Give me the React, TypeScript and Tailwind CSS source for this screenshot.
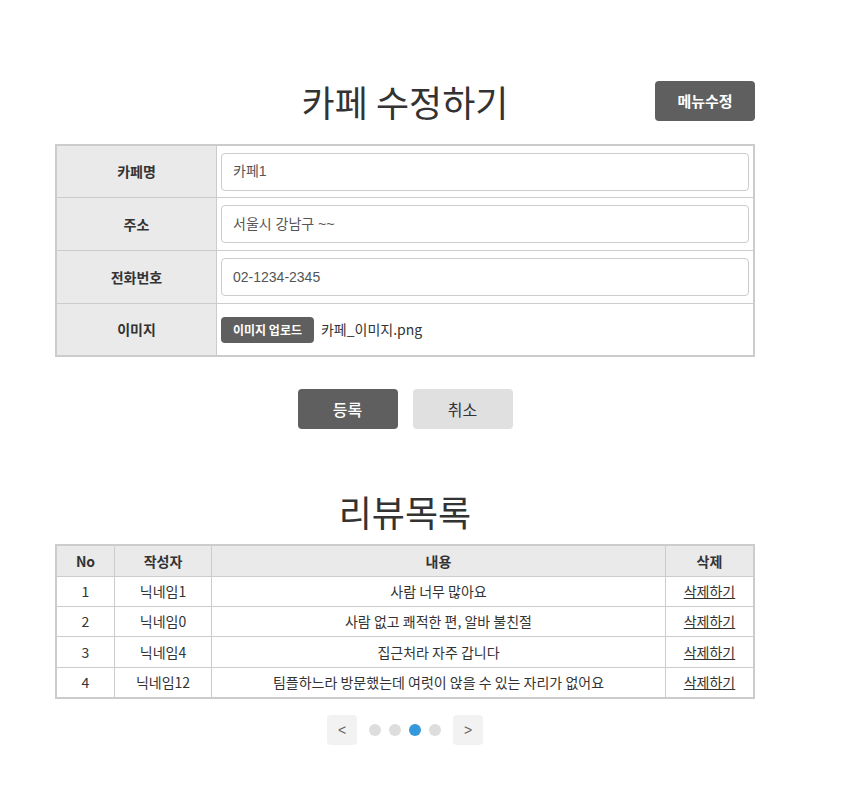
import React from "react";

const reviews = [
  { no: 1, name: "닉네임1", body: "사람 너무 많아요", h: "h-[30px]" },
  { no: 2, name: "닉네임0", body: "사람 없고 쾌적한 편, 알바 불친절", h: "h-[30px]" },
  { no: 3, name: "닉네임4", body: "집근처라 자주 갑니다", h: "h-[31px]" },
  { no: 4, name: "닉네임12", body: "팀플하느라 방문했는데 여럿이 앉을 수 있는 자리가 없어요", h: "h-[30px]" },
];

function InputRow({ label, value, h, top }: { label: string; value: string; h: string; top: boolean }) {
  return (
    <div className={`flex ${h} ${top ? "border-t border-[#cccccc]" : ""}`}>
      <div className="w-[160px] shrink-0 bg-[#eaeaea] border-r border-[#cccccc] flex items-center justify-center text-[14px] font-bold text-[#333]">
        {label}
      </div>
      <div className="flex-1 flex items-center px-[4px]">
        <div className="w-full h-[38px] rounded-[4px] border border-[#cccccc] flex items-center px-[11px] text-[14px] text-[#555] font-['Liberation_Sans','Noto_Sans_CJK_KR',sans-serif]">
          {value}
        </div>
      </div>
    </div>
  );
}

export default function App() {
  return (
    <div className="min-h-[792px] bg-white font-['Noto_Sans_CJK_KR','Noto_Sans',sans-serif] text-[#333]">
      <div className="ml-[55px] w-[700px] pt-[74px]">
        <div className="grid grid-cols-[1fr_auto_1fr] items-center">
          <div />
          <h1 className="text-[36px] leading-[54px] font-normal text-[#333]">카페 수정하기</h1>
          <div className="flex justify-end">
            <button className="w-[100px] h-[40px] rounded-[4px] bg-[#5f5f5f] text-white text-[15px] font-bold">
              메뉴수정
            </button>
          </div>
        </div>

        <div className="mt-[16px] border-2 border-[#cccccc]">
          <InputRow label="카페명" value="카페1" h="h-[51px]" top={false} />
          <InputRow label="주소" value="서울시 강남구 ~~" h="h-[53px]" top />
          <InputRow label="전화번호" value="02-1234-2345" h="h-[53px]" top />
          <div className="flex h-[52px] border-t border-[#cccccc]">
            <div className="w-[160px] shrink-0 bg-[#eaeaea] border-r border-[#cccccc] flex items-center justify-center text-[14px] font-bold text-[#333]">
              이미지
            </div>
            <div className="flex-1 flex items-center px-[4px] gap-[7px]">
              <button className="h-[26px] px-[12px] rounded-[4px] bg-[#5f5f5f] text-white text-[12px] font-bold leading-none">
                이미지 업로드
              </button>
              <span className="text-[14px] text-[#333]">카페_이미지.png</span>
            </div>
          </div>
        </div>

        <div className="mt-[32px] flex justify-center gap-[15px]">
          <button className="w-[100px] h-[40px] rounded-[4px] bg-[#5f5f5f] text-white text-[16px] font-medium">등록</button>
          <button className="w-[100px] h-[40px] rounded-[4px] bg-[#e0e0e0] text-[#333] text-[16px]">취소</button>
        </div>

        <h2 className="mt-[55px] mb-[6px] text-center text-[36px] leading-[54px] font-normal text-[#333]">리뷰목록</h2>

        <div className="border-2 border-[#cccccc] text-[14px]">
          <div className="flex h-[30px] bg-[#eaeaea] font-bold">
            <div className="w-[57px] flex items-center justify-center">No</div>
            <div className="w-[97px] border-l border-[#cccccc] flex items-center justify-center">작성자</div>
            <div className="flex-1 border-l border-[#cccccc] flex items-center justify-center">내용</div>
            <div className="w-[88px] border-l border-[#cccccc] flex items-center justify-center">삭제</div>
          </div>
          {reviews.map((r) => (
            <div key={r.no} className={`flex ${r.h} border-t border-[#cccccc]`}>
              <div className="w-[57px] flex items-center justify-center">{r.no}</div>
              <div className="w-[97px] border-l border-[#cccccc] flex items-center justify-center">{r.name}</div>
              <div className="flex-1 border-l border-[#cccccc] flex items-center justify-center">{r.body}</div>
              <div className="w-[88px] border-l border-[#cccccc] flex items-center justify-center">
                <a className="underline text-[#333]">삭제하기</a>
              </div>
            </div>
          ))}
        </div>

        <div className="mt-[16px] flex items-center justify-center gap-3">
          <button className="w-[30px] h-[30px] rounded-[4px] bg-[#f2f2f2] text-[#666] text-[14px] font-['Liberation_Sans',sans-serif]">&lt;</button>
          <div className="flex items-center gap-2">
            <span className="w-[12px] h-[12px] rounded-full bg-[#dddddd]" />
            <span className="w-[12px] h-[12px] rounded-full bg-[#dddddd]" />
            <span className="w-[12px] h-[12px] rounded-full bg-[#3498db]" />
            <span className="w-[12px] h-[12px] rounded-full bg-[#dddddd]" />
          </div>
          <button className="w-[30px] h-[30px] rounded-[4px] bg-[#f2f2f2] text-[#666] text-[14px] font-['Liberation_Sans',sans-serif]">&gt;</button>
        </div>
      </div>
    </div>
  );
}
